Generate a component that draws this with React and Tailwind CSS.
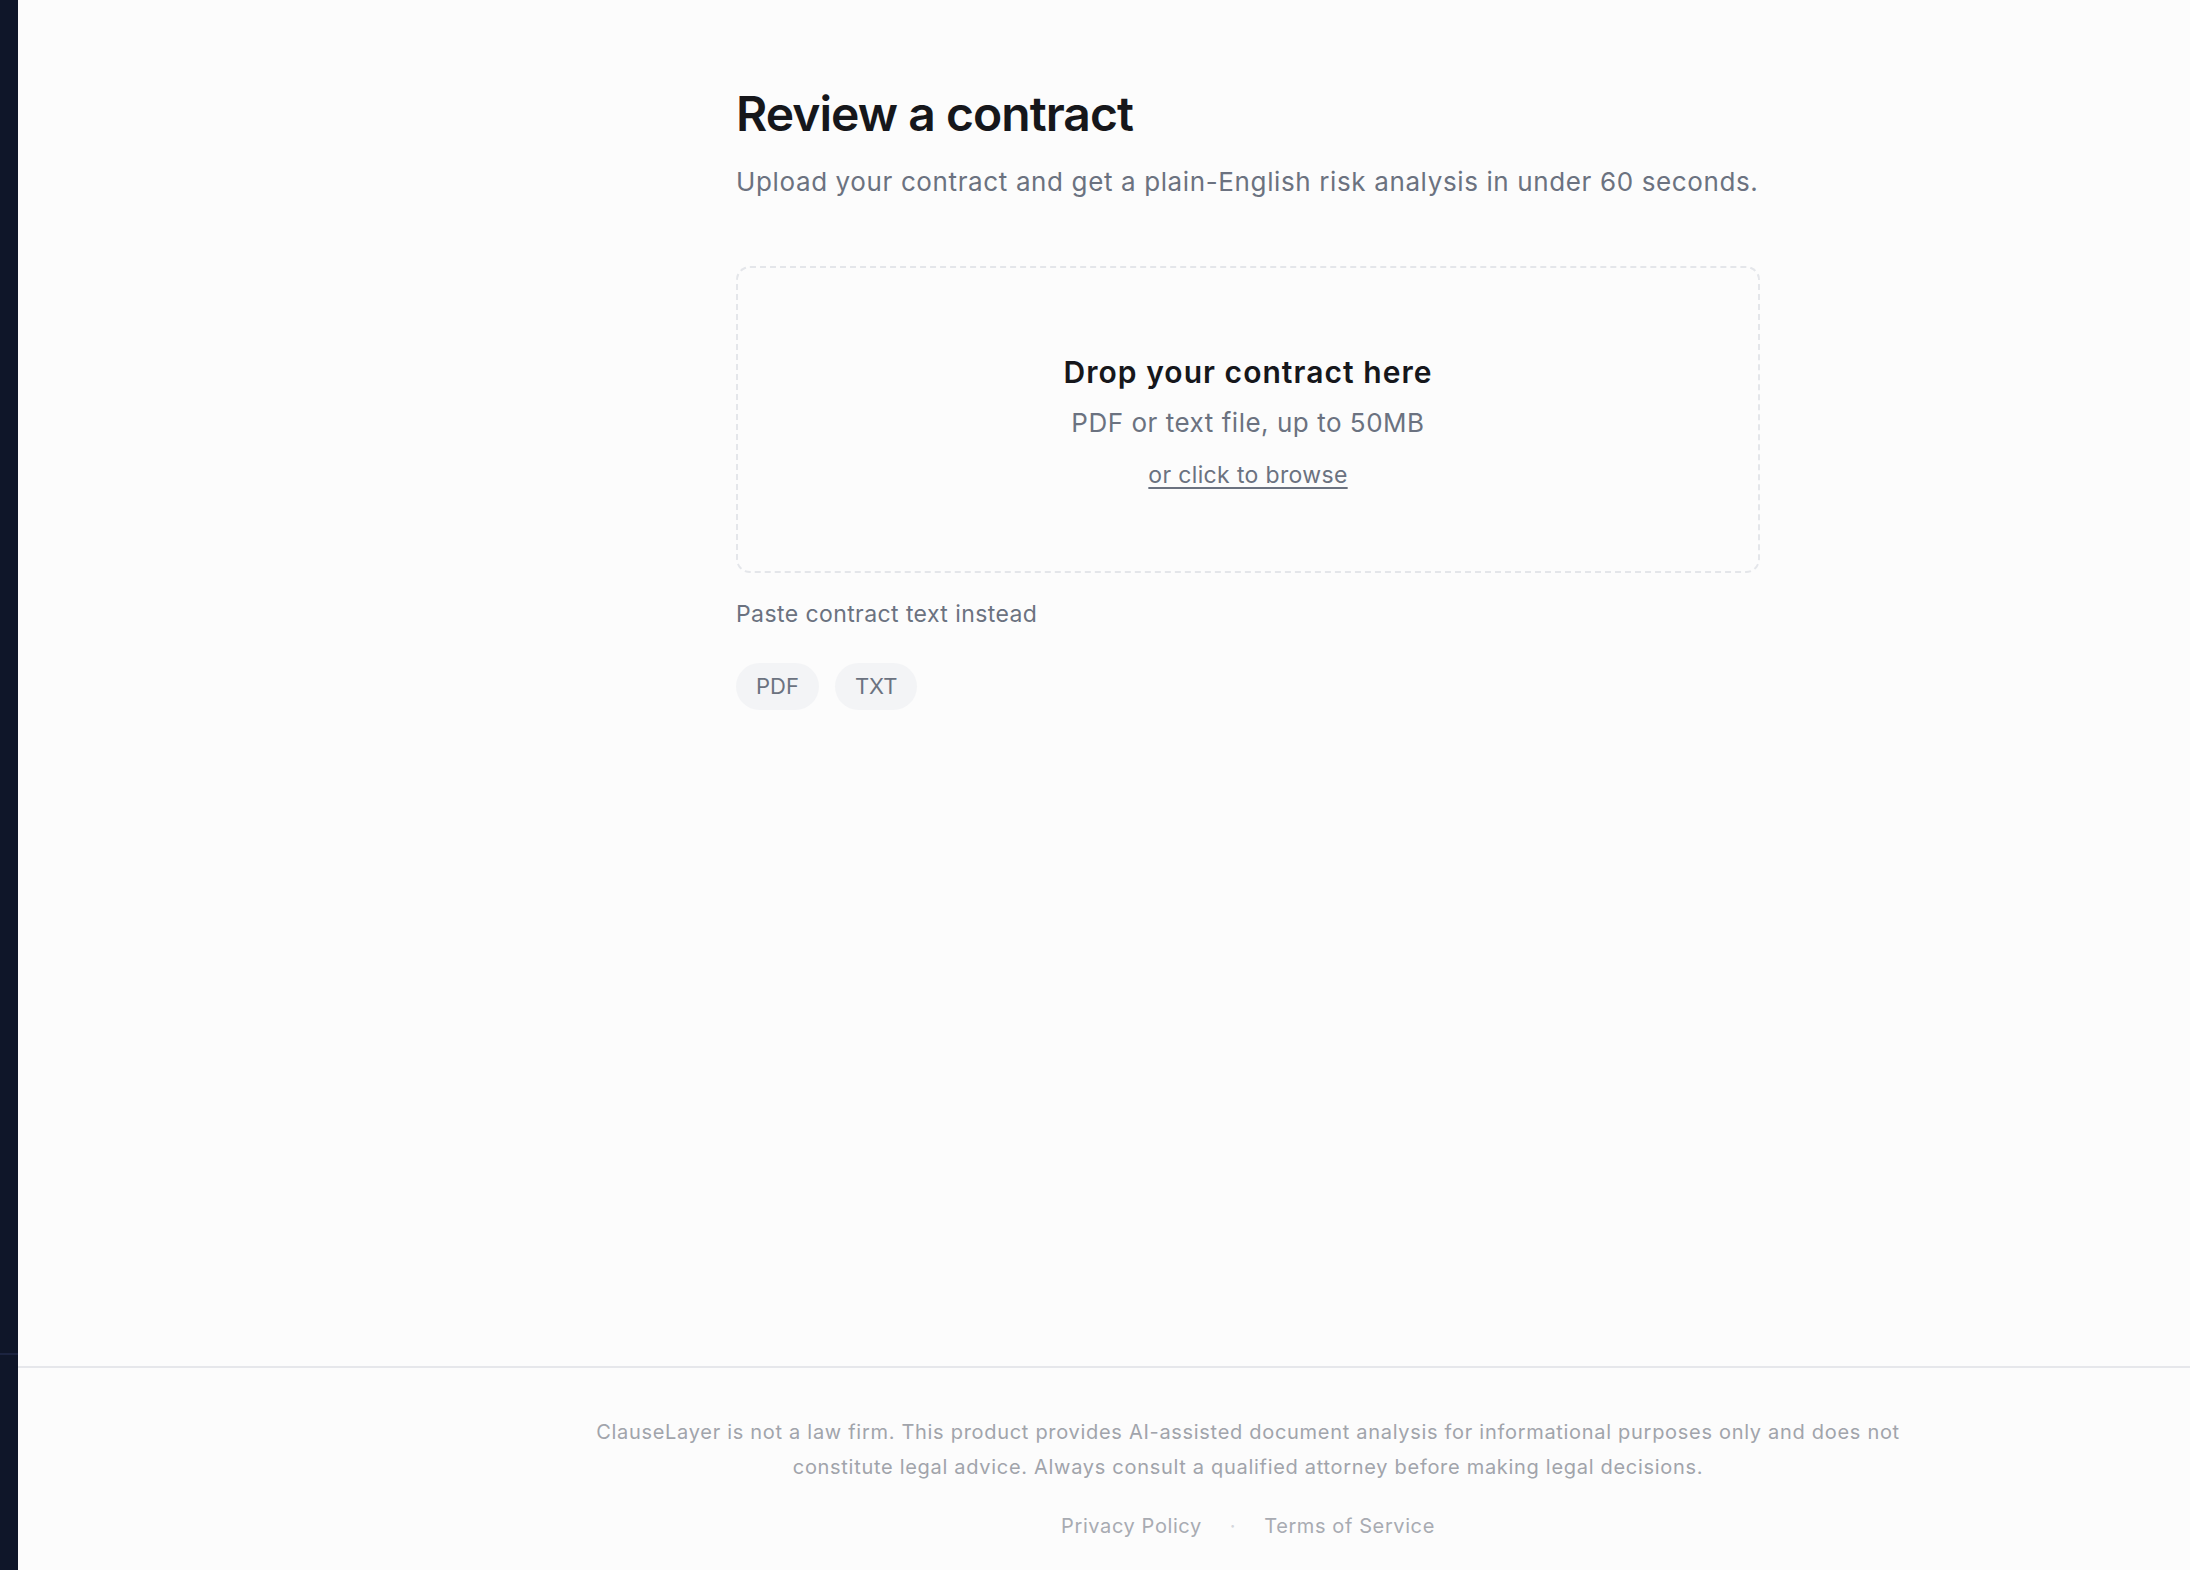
export default function App() {
  return (
    <div
      className="flex min-h-screen bg-[#fcfcfc] text-[#6b7280]"
      style={{ fontFamily: 'Inter, "Noto Sans", sans-serif' }}
    >
      <aside className="flex w-[18px] shrink-0 flex-col bg-[#0f1629]">
        <div className="flex-1" />
        <div className="h-[2px] bg-[#1c2440]" />
        <div className="h-[215px]" />
      </aside>

      <div className="flex min-w-0 flex-1 flex-col">
        <main className="flex-1 pl-[288px]">
          <div className="mx-auto w-[1024px] pt-[85px]">
            <h1 className="text-[48px] font-semibold leading-[1.2] tracking-[-0.02em] text-[#16171b]">
              Review a contract
            </h1>
            <p className="mt-[20px] whitespace-nowrap text-[26px] leading-[37px] tracking-[0.024em] text-[#6b7280]">
              Upload your contract and get a plain-English risk analysis in under 60 seconds.
            </p>

            <div className="mt-[66px] flex h-[307px] cursor-pointer flex-col items-center rounded-[14px] border-2 border-dashed border-[#e4e6ea] pt-[86px] text-center">
              <h2 className="text-[30px] font-semibold leading-[36px] tracking-[0.035em] text-[#16171b]">
                Drop your contract here
              </h2>
              <p className="mt-[15px] text-[26px] leading-[36px] tracking-[0.02em] text-[#6b7280]">
                PDF or text file, up to 50MB
              </p>
              <span className="mt-[18px] text-[23px] leading-[32px] tracking-[0.015em] text-[#6b7280] underline underline-offset-[4px]">
                or click to browse
              </span>
            </div>

            <button type="button" className="mt-[25px] block text-[23px] leading-[32px] tracking-[0.018em] text-[#6b7280]">
              Paste contract text instead
            </button>

            <div className="mt-[33px] flex gap-[16px]">
              <span className="flex h-[47px] items-center rounded-full bg-[#f3f4f6] px-[20px] text-[22px] text-[#6b7280]">
                PDF
              </span>
              <span className="flex h-[47px] items-center rounded-full bg-[#f3f4f6] px-[20px] text-[22px] text-[#6b7280]">
                TXT
              </span>
            </div>
          </div>
        </main>

        <footer className="h-[204px] border-t-2 border-[#e6e7eb] pl-[288px] pt-[47px]">
          <div className="mx-auto flex w-[1400px] flex-col items-center text-center">
            <p className="max-w-[1340px] text-[20px] leading-[35px] tracking-[0.035em] text-[#a1a4ab]">
              ClauseLayer is not a law firm. This product provides AI-assisted document analysis for informational
              purposes only and does not constitute legal advice. Always consult a qualified attorney before making
              legal decisions.
            </p>
            <div className="mt-[26px] flex items-center gap-[28px] text-[20px] leading-[30px] tracking-[0.03em] text-[#a8abb2]">
              <a href="#privacy">Privacy Policy</a>
              <span className="text-[#d4d6db]">·</span>
              <a href="#terms">Terms of Service</a>
            </div>
          </div>
        </footer>
      </div>
    </div>
  )
}
